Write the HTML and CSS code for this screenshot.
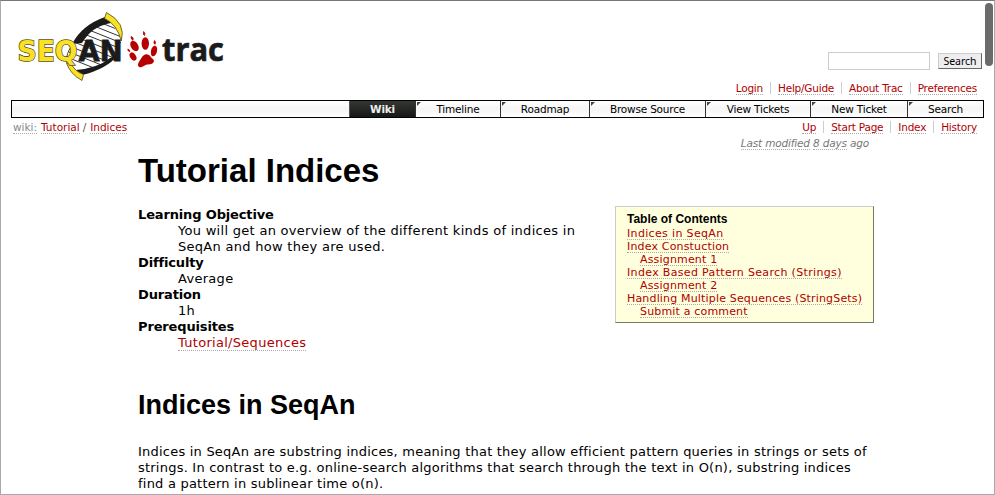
FILE: index.html
```html
<!DOCTYPE html>
<html lang="en">
<head>
<meta charset="utf-8">
<title>Tutorial Indices</title>
<link rel="stylesheet" href="styles.css">
</head>
<body>
<div class="window">
  <header class="banner">
    <svg class="logo" width="222" height="84" viewBox="8 6 222 84" role="img" aria-label="SeqAn trac">
      <defs><clipPath id="helix"><path d="M76 40Q88 23 108 21Q122 32 121 45Q117 58 102 67Q88 74 80 72Q67 64 68 53Z"/></clipPath></defs>
      <g clip-path="url(#helix)" stroke="#333" stroke-width="1" fill="none">
        <path d="M64 8l65 26M64 14l65 26M64 20l65 26M64 26l65 26M64 32l65 26M64 38l65 26M64 44l65 26M64 50l65 26M64 56l65 26"/>
      </g>
      <path d="M72 44Q82 25 105 17L111 23Q92 26 82 43ZM76 70Q98 68 110 58L118 55Q107 69 82 75Z" fill="#1b1b1b"/>
      <path d="M106.500 12.500L104.500 18.500Q117 24 121.300 41Q126.500 23 106.500 12.500ZM66.500 63Q70 74 82 80.500L83.500 74.500Q74 71 71 63Z" fill="#fbe122" stroke="#4c4721" stroke-width=".8"/>
      <path d="M73 44Q65 54 67 63" fill="none" stroke="#4c4721"/>
      <text class="seq" x="17.500" y="61" textLength="60" lengthAdjust="spacingAndGlyphs">SEQ</text>
      <text class="an" x="78.500" y="61" textLength="44" lengthAdjust="spacingAndGlyphs">AN</text>
      <g fill="#b70000">
        <ellipse cx="134.500" cy="46" rx="3.600" ry="5.600" transform="rotate(-32 134.500 46)"/>
        <ellipse cx="145.300" cy="43.500" rx="3.700" ry="6.300"/>
        <ellipse cx="154" cy="51" rx="3" ry="5.400" transform="rotate(14 154 51)"/>
        <ellipse cx="133" cy="56.500" rx="2.900" ry="4.500" transform="rotate(-32 133 56.500)"/>
        <path d="M147.500 54.500C150.500 55 150.500 57.500 153 59C155.500 61.500 152.500 64.500 148.500 64.500C144 64.500 143 67.500 140 67.300C137 66.500 138 63 139.500 61C142 58 143 53.500 147.500 54.500Z"/>
        <path d="M131 36.500q3 .5 2 3.800q-2.200-.8-2-3.800zM143.600 31.500q2 1.300 1 4q-2-.7-1-4zM154.500 40.500q2 1.800.5 3.800q-2-.8-.5-3.800zM127.800 49q2.400.7 2 2.800q-2-.3-2-2.800z" stroke="#b70000" stroke-width=".8"/>
      </g>
      <text class="trac" x="162" y="61" textLength="62" lengthAdjust="spacingAndGlyphs">trac</text>
    </svg>
    <div class="side">
      <form class="search"><input type="text" aria-label="Search text"><button type="button">Search</button></form>
      <ul class="links meta">
        <li><a>Login</a></li><li><a>Help/Guide</a></li><li><a>About Trac</a></li><li><a>Preferences</a></li>
      </ul>
    </div>
  </header>
  <nav class="mainnav">
    <span class="tab wiki">Wiki</span><span class="tab timeline">Timeline</span><span class="tab roadmap">Roadmap</span><span class="tab browse">Browse Source</span><span class="tab tickets">View Tickets</span><span class="tab new">New Ticket</span><span class="tab find">Search</span>
  </nav>
  <div class="context">
    <div class="path"><a class="first">wiki:</a><a>Tutorial</a><i>/</i><a>Indices</a></div>
    <ul class="links"><li><a>Up</a></li><li><a>Start Page</a></li><li><a>Index</a></li><li><a>History</a></li></ul>
  </div>
  <main class="content">
    <p class="modified"><a>Last modified</a> <a>8 days</a> ago</p>
    <h1>Tutorial Indices</h1>
    <div class="intro">
      <dl>
        <dt>Learning Objective</dt><dd>You will get an overview of the different kinds of indices in<br>SeqAn and how they are used.</dd>
        <dt>Difficulty</dt><dd>Average</dd>
        <dt>Duration</dt><dd>1h</dd>
        <dt>Prerequisites</dt><dd><a>Tutorial/Sequences</a></dd>
      </dl>
      <aside class="toc">
        <h4>Table of Contents</h4>
        <ul>
          <li class="wide"><a>Indices in SeqAn</a></li><li><a>Index Constuction</a></li><li class="sub"><a>Assignment 1</a></li><li class="wide"><a>Index Based Pattern Search (Strings)</a></li><li class="sub"><a>Assignment 2</a></li><li><a>Handling Multiple Sequences (StringSets)</a></li><li class="sub"><a>Submit a comment</a></li>
        </ul>
      </aside>
    </div>
    <h2>Indices in SeqAn</h2>
    <p class="text">Indices in SeqAn are substring indices, meaning that they allow efficient pattern queries in strings or sets of<br>strings. In contrast to e.g. online-search algorithms that search through the text in O(n), substring indices<br>find a pattern in sublinear time o(n).</p>
  </main>
  <div class="scrollbar"></div>
</div>
</body>
</html>
```
FILE: styles.css
```css
* { box-sizing: border-box; }
body { margin: 0; background: #fff; color: #000; font: 13px/16px Verdana, "DejaVu Sans", sans-serif; overflow: hidden; }
ul, dl, dd, p, h1, h2, h4 { margin: 0; padding: 0; }
ul { list-style: none; }
.window { position: relative; height: 495px; overflow: hidden; border: 1px solid #aaa; border-top-color: #777; }
a { color: #b00000; border-bottom: 1px dotted #aaa; }
.banner { display: flex; justify-content: space-between; height: 99px; padding: 5px 9px 0 7px; }
.logo { display: block; flex: none; }
.seq, .an { font: bold 29px "DejaVu Sans", sans-serif; }
.seq { fill: #fbe122; stroke: #57502a; stroke-width: 1.6px; paint-order: stroke; }
.an { fill: #1b1b1b; stroke: #1b1b1b; stroke-width: .8px; }
.trac { font: bold 33px "Open Sans", sans-serif; fill: #1b1b1b; stroke: #1b1b1b; stroke-width: .7px; }
.side { display: flex; flex-direction: column; align-items: flex-end; padding-top: 46px; }
.search { display: flex; align-items: center; gap: 8px; margin-right: 3px; height: 18px; }
.search input { width: 102px; height: 18px; border: 1px solid #ccc; padding: 0; }
.search button { width: 44px; height: 16px; padding: 0; font: 10.500px/13px "Noto Sans", sans-serif; color: #000; background: #eee; border: 1px solid #ccc; border-right-color: #666; border-bottom-color: #666; }
.links { display: flex; font-size: 10.500px; letter-spacing: -.22px; line-height: 12px; }
.links li { height: 12px; padding: 0 7px; border-right: 1px solid #ccc; white-space: nowrap; }
.links li:last-child { border-right: 0; padding-right: 0; }
.links a { display: block; height: 13px; }
.meta { margin: 12px 8px 0 0; }
.mainnav { display: flex; justify-content: flex-end; width: 973px; height: 18px; margin-left: 10px; border: 1px solid #000; background: linear-gradient(#fff, #f5f5f5 50%, #fff); font-size: 10.500px; letter-spacing: -.2px; line-height: 17px; }
.tab { position: relative; height: 16px; border-left: 1px solid #333; text-align: center; white-space: nowrap; }
.tab::before { content: ""; position: absolute; left: 1px; top: 1px; border-top: 4px solid #444; border-right: 4px solid transparent; }
.wiki { width: 66px; background: linear-gradient(#353735, #161816); color: #eee; font-weight: bold; border-color: #555; }
.wiki::before { display: none; }
.timeline { width: 85px; } .roadmap { width: 89px; } .browse { width: 116px; }
.tickets { width: 105px; } .new { width: 97px; } .find { width: 76px; }
.context { display: flex; justify-content: space-between; height: 19px; padding: 3px 17px 0 12px; }
.path { display: flex; font-size: 10.500px; line-height: 12px; }
.path a { height: 13px; }
.path i { margin: 0 4px 0 3px; font-style: normal; color: #555; }
.path .first { color: #888; margin-right: 4px; }
.content { margin-left: 137px; width: 736px; }
.modified { text-align: right; margin-right: 5px; height: 14px; font: italic 10.500px/12px "DejaVu Sans", sans-serif; letter-spacing: -.17px; color: #777; }
.modified a { color: inherit; }
h1, h2 { font-family: "Liberation Sans", Arial, sans-serif; white-space: nowrap; }
h1 { height: 55px; font-size: 33px; line-height: 40px; }
.intro { display: flex; justify-content: space-between; height: 184px; }
dl { padding-top: 1px; }
dt { font-weight: bold; letter-spacing: -.15px; }
dd { margin-left: 40px; letter-spacing: .29px; white-space: nowrap; }
.toc { width: 259px; height: 117px; background: #ffd; border: 1px solid #ccc; border-right-color: #776; border-bottom-color: #776; padding: 5px 11px; font-size: 11px; letter-spacing: .17px; line-height: 13px; }
.toc h4 { font: bold 12px/15px "Liberation Sans", Arial, sans-serif; letter-spacing: 0; }
.toc li { white-space: nowrap; height: 13px; }
.toc li a { display: inline-block; height: 13px; }
.toc .wide { letter-spacing: .34px; }
.sub { padding-left: 13px; }
h2 { height: 54px; font-size: 27px; line-height: 30px; }
.text { white-space: nowrap; letter-spacing: .22px; }
.scrollbar { position: absolute; right: 1px; top: 2px; width: 8px; height: 63px; border-radius: 4px; background: #6b6b6b; }
```
